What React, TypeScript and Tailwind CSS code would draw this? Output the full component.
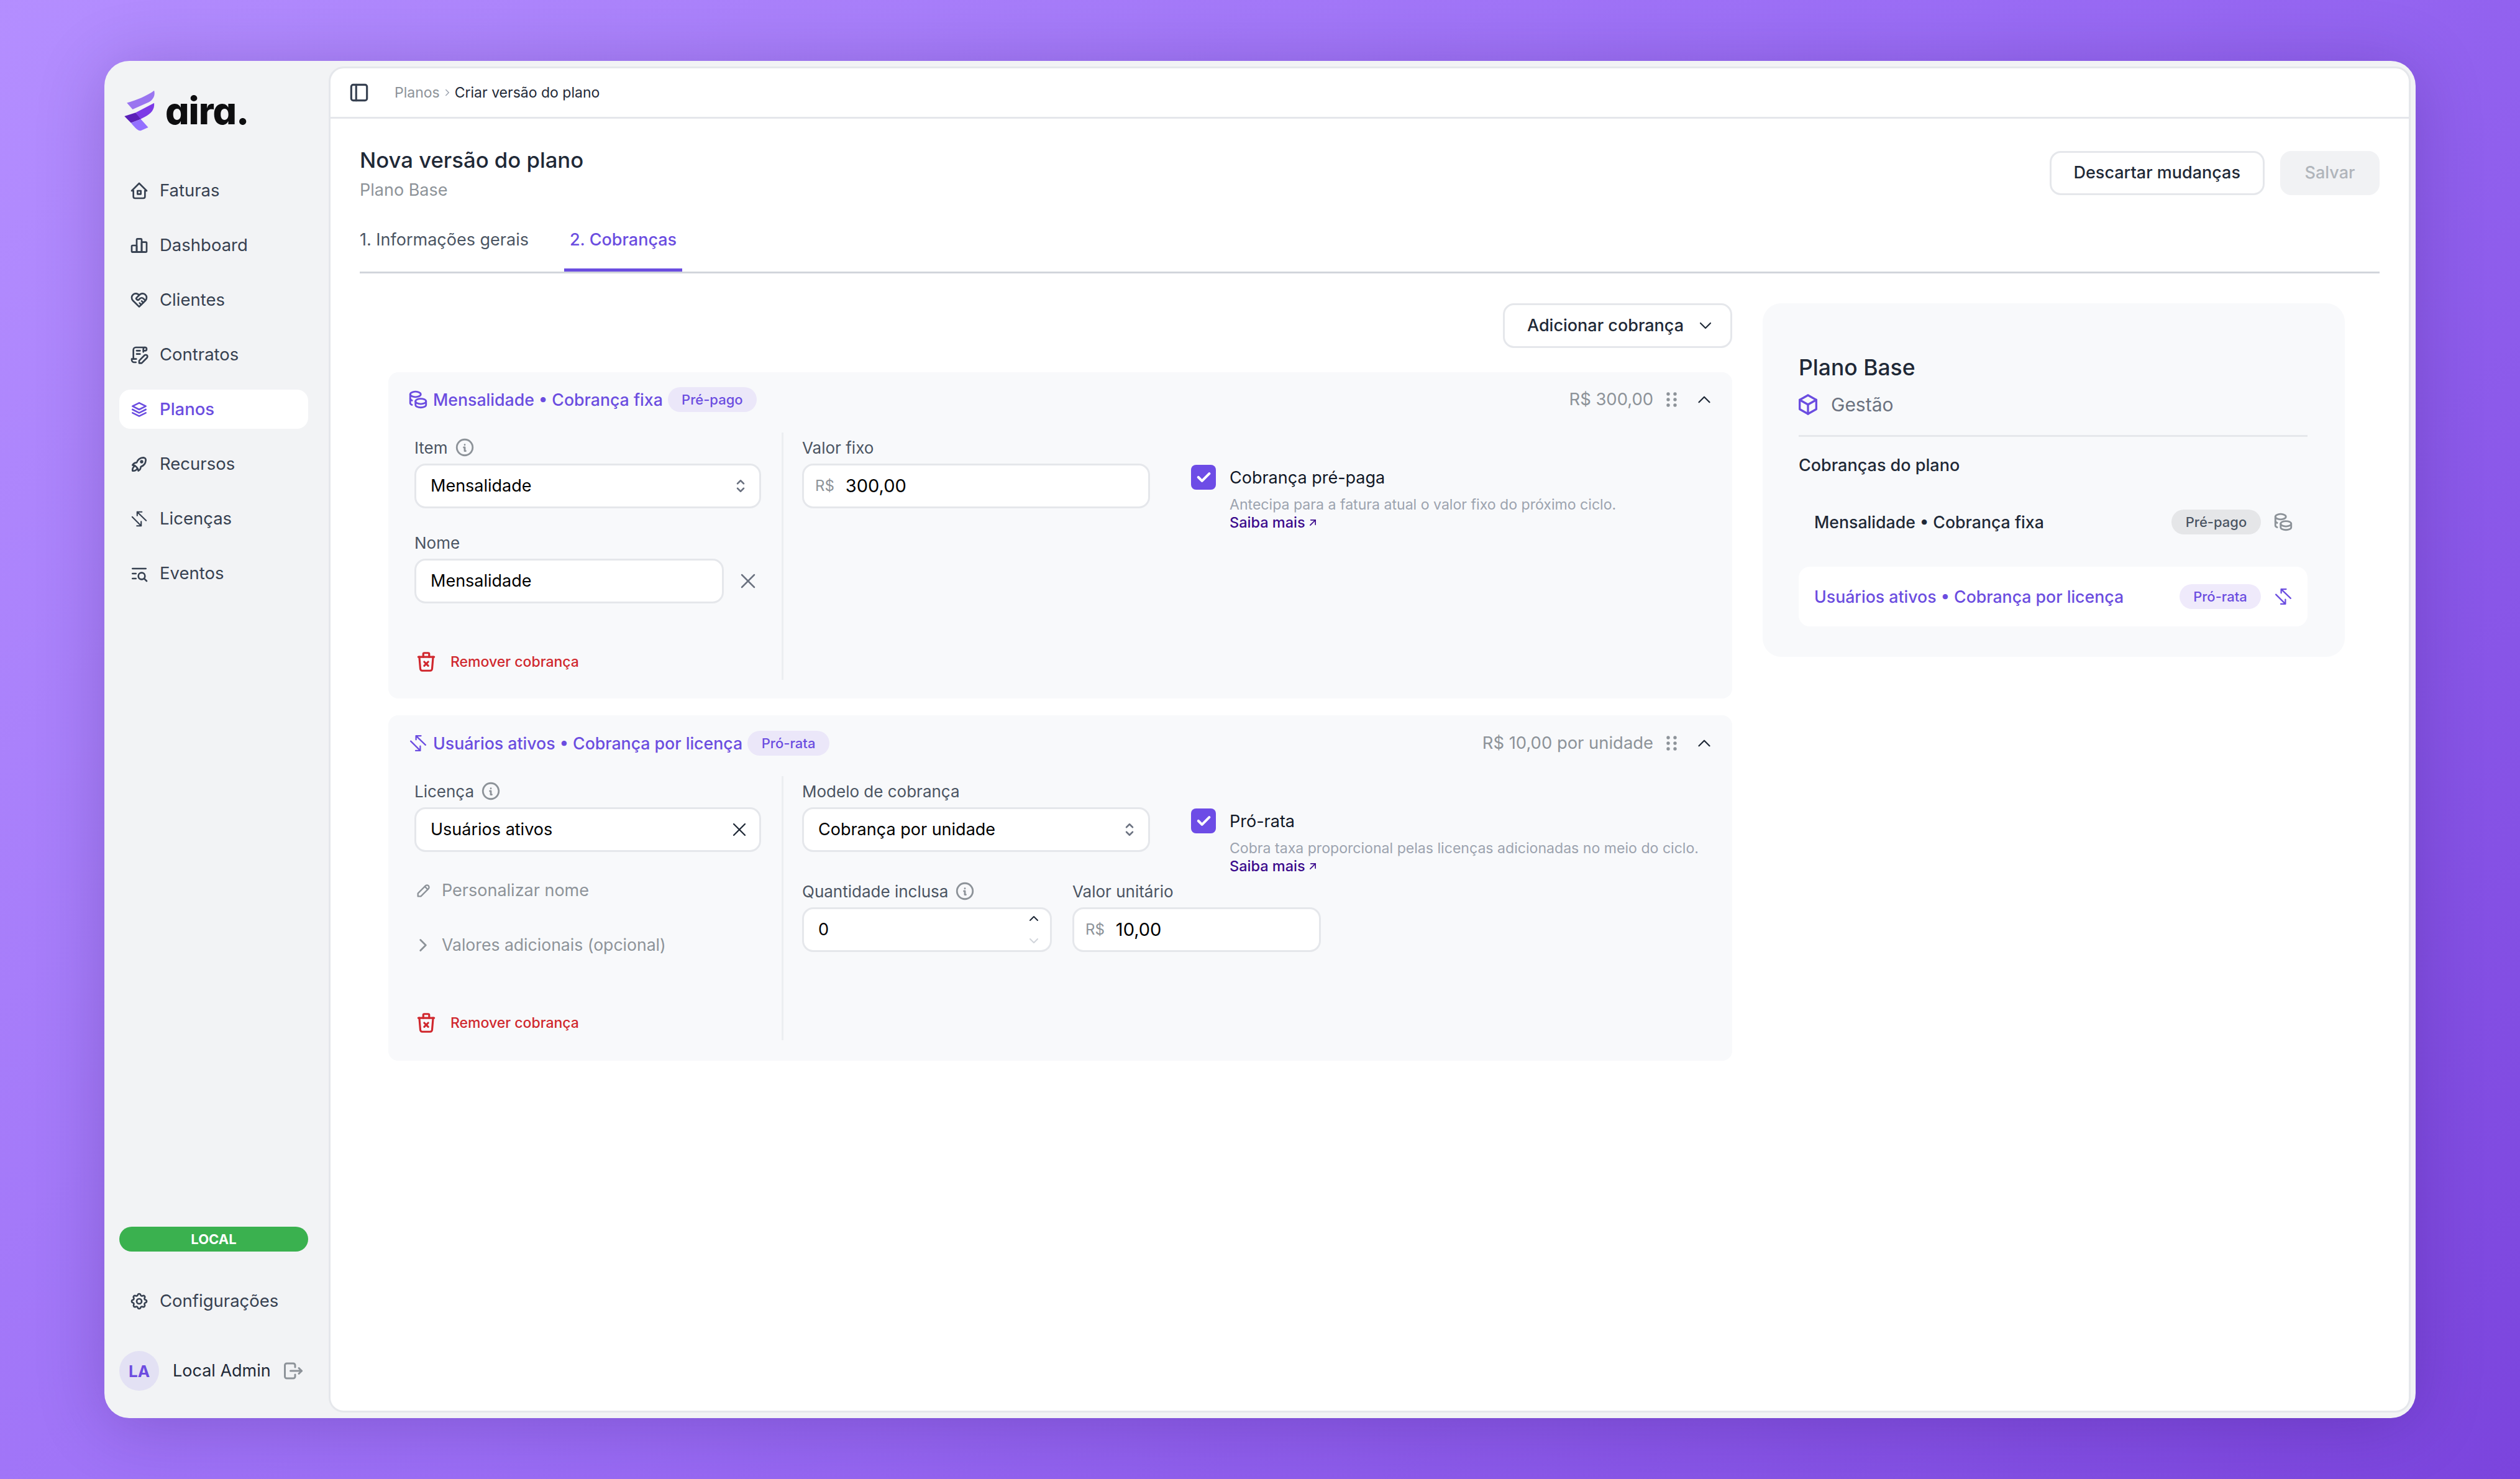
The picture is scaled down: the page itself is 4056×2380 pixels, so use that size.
import React from 'react';
import {
  TbHome2, TbChartBar, TbHeartHandshake, TbContract, TbStack2, TbRocket, TbListSearch, TbSettings, TbLogout,
  TbLayoutSidebar, TbInfoCircle, TbSelector, TbCoins, TbX, TbTrashX, TbPencil, TbChevronUp, TbChevronDown,
  TbChevronRight, TbBox, TbArrowUpRight, TbCheck,
} from 'react-icons/tb';

const SwapIcon = ({ className }: { className?: string }) => (
  <svg viewBox="-3 -3 30 30" fill="none" stroke="currentColor" strokeWidth="2" strokeLinecap="round" strokeLinejoin="round" className={className}>
    <path d="M22.5 14.5 9 1.5M9 7V1.5h7M1.5 9 15 22.5M15 16v6.5H8.5" />
  </svg>
);

const Logo = () => (
  <svg viewBox="30 30 150 200" className="w-[50px] h-[66px] shrink-0">
    <path d="M42 92C90 78 140 58 175 32C181 55 172 75 150 88L70 124Z" fill="#9a75f0" />
    <path d="M85 140L175 93C178 125 160 145 130 160L108 172Z" fill="#7c3ae6" />
    <path d="M30 157L85 140L110 172L62 190Z" fill="#5a20b8" />
    <path d="M62 190L110 172L146 212L110 228C95 228 85 218 62 190Z" fill="#9470ff" />
  </svg>
);

const Grip = () => (
  <svg viewBox="0 0 17 24" className="w-[17px] h-[24px] text-[#8d9399]" fill="currentColor">
    <circle cx="3" cy="3" r="2.7" /><circle cx="14" cy="3" r="2.7" />
    <circle cx="3" cy="12" r="2.7" /><circle cx="14" cy="12" r="2.7" />
    <circle cx="3" cy="21" r="2.7" /><circle cx="14" cy="21" r="2.7" />
  </svg>
);

const nav = [
  { label: 'Faturas', icon: TbHome2 },
  { label: 'Dashboard', icon: TbChartBar },
  { label: 'Clientes', icon: TbHeartHandshake },
  { label: 'Contratos', icon: TbContract },
  { label: 'Planos', icon: TbStack2, active: true },
  { label: 'Recursos', icon: TbRocket },
  { label: 'Licenças', icon: SwapIcon },
  { label: 'Eventos', icon: TbListSearch },
];

const Sidebar = () => (
  <aside className="w-[361px] shrink-0 flex flex-col pl-[24px] pr-[33px] pt-[48px] pb-[44px]">
    <div className="flex items-center gap-[16px] pl-[8px] h-[64px]">
      <Logo />
      <span className="text-[60.5px] leading-none font-extrabold text-[#0e0e10] tracking-[-1px] [font-feature-settings:'cv11']">aira.</span>
    </div>
    <nav className="mt-[65px] flex flex-col gap-[25px]">
      {nav.map((n) => (
        <div
          key={n.label}
          className={`h-[63px] flex items-center gap-[17px] pl-[16px] rounded-[18px] text-[27.5px] ${n.active ? 'bg-white text-[#6b4de0] font-medium' : 'text-[#374151]'}`}
        >
          <n.icon className="w-[32px] h-[32px] shrink-0" />
          {n.label}
        </div>
      ))}
    </nav>
    <div className="mt-auto h-[40px] rounded-full bg-[#3ab14f] text-white text-[22px] font-bold flex items-center justify-center">LOCAL</div>
    <div className="mt-[48px] h-[63px] flex items-center gap-[17px] pl-[16px] text-[27.5px] text-[#374151]">
      <TbSettings className="w-[32px] h-[32px] shrink-0" />
      Configurações
    </div>
    <div className="mt-[49px] flex items-center">
      <div className="w-[64px] h-[64px] rounded-full bg-[#e3e1f4] text-[#6d4ce0] text-[26px] font-bold flex items-center justify-center">LA</div>
      <span className="ml-[22px] text-[27px] text-[#1f2937]">Local Admin</span>
      <TbLogout className="ml-[18px] w-[36px] h-[36px] text-[#8d9399]" />
    </div>
  </aside>
);

const Label = ({ children, info }: { children: React.ReactNode; info?: boolean }) => (
  <div className="h-[36px] mb-[8px] flex items-center gap-[10px] text-[26px] text-[#4b5563]">
    {children}
    {info && <TbInfoCircle className="w-[34px] h-[34px] text-[#8d9399]" />}
  </div>
);

const Box = ({ className, children }: { className?: string; children: React.ReactNode }) => (
  <div className={`h-[72px] flex items-center px-[23px] bg-white rounded-[18px] border-[3px] border-[#e5e7eb] text-[27px] text-black ${className ?? ''}`}>
    {children}
  </div>
);

const Badge = ({ children, className }: { children: React.ReactNode; className?: string }) => (
  <span className={`h-[40px] flex items-center justify-center rounded-full text-[22px] font-medium ${className ?? ''}`}>{children}</span>
);

const Remove = () => (
  <div className="mt-auto h-[30px] flex items-center gap-[20px] text-[23px] text-[#d0282e] font-medium">
    <TbTrashX className="w-[38px] h-[38px] shrink-0" />
    Remover cobrança
  </div>
);

const CardHeader = ({ icon: Icon, title, badge, badgeClass, amount, className }: {
  icon: React.ComponentType<{ className?: string }>; title: string; badge: string; badgeClass: string; amount: string; className: string;
}) => (
  <div className={`flex items-center pl-[31px] pr-[28px] ${className}`}>
    <Icon className="w-[34px] h-[34px] text-[#6b4de0]" />
    <span className="ml-[7px] text-[26.7px] font-medium text-[#6b4de0]">{title}</span>
    <Badge className={`ml-[8px] bg-[#ebe7f9] text-[#6b4de0] ${badgeClass}`}>{badge}</Badge>
    <span className="ml-auto text-[27.4px] text-[#8d9399]">{amount}</span>
    <span className="ml-[21px]"><Grip /></span>
    <TbChevronUp className="ml-[27px] w-[34px] h-[34px] text-[#1f2937]" strokeWidth={1.6} />
  </div>
);

const CheckInfo = ({ label, text }: { label: string; text: string }) => (
  <div className="flex gap-[22px]">
    <div className="w-[40px] h-[40px] shrink-0 rounded-[8px] bg-[#6d4ce6] flex items-center justify-center">
      <TbCheck className="w-[28px] h-[28px] text-white" strokeWidth={3.5} />
    </div>
    <div className="flex flex-col">
      <span className="mt-[3px] h-[36px] leading-[36px] text-[27px] text-[#111827]">{label}</span>
      <span className="mt-[10px] h-[30px] leading-[30px] text-[23.1px] text-[#9ca3af] whitespace-nowrap">{text}</span>
      <span className="h-[28px] leading-[28px] text-[23.5px] font-medium text-[#3b0a8c] flex items-center">
        Saiba mais
        <TbArrowUpRight className="ml-[2px] w-[20px] h-[20px]" />
      </span>
    </div>
  </div>
);

const Money = ({ value }: { value: string }) => (
  <div className="-ml-[5px] flex items-center">
    <span className="text-[24px] text-[#8d9399] mr-[18px]">R$</span>
    <span className="text-[29px]">{value}</span>
  </div>
);

const Tabs = () => (
  <div className="mt-[44px] flex gap-[57px] border-b-[3px] border-[#d1d5db]">
    <div className="pb-[29px] border-b-[5px] border-transparent h-[69px] text-[27px] leading-[36px] text-[#4b5563]">1. Informações gerais</div>
    <div className="px-[9px] pb-[29px] border-b-[5px] border-[#6b4de0] h-[69px] text-[27px] leading-[36px] font-medium text-[#6b4de0]">2. Cobranças</div>
  </div>
);

const FixedCard = () => (
  <section className="bg-[#f8f9fb] rounded-[16px] pb-[30px]">
    <CardHeader icon={TbCoins} title="Mensalidade • Cobrança fixa" badge="Pré-pago" badgeClass="w-[143px]" amount="R$ 300,00" className="h-[88px]" />
    <div className="mt-[9px] h-[398px] flex pl-[42px]">
      <div className="w-[558px] flex flex-col pt-[6px] pb-[14px]">
        <Label info>Item</Label>
        <Box className="justify-between">
          Mensalidade
          <TbSelector className="-mr-[8px] w-[30px] h-[30px] text-[#6b7280]" />
        </Box>
        <div className="mt-[37px]"><Label>Nome</Label></div>
        <div className="flex items-center">
          <Box className="w-[498px]">Mensalidade</Box>
          <TbX className="ml-[19px] w-[40px] h-[40px] text-[#6b7280]" strokeWidth={1.5} />
        </div>
        <Remove />
      </div>
      <div className="ml-[33px] w-[3px] bg-[#eceef1]" />
      <div className="ml-[30px] flex gap-[66px] pt-[6px]">
        <div className="w-[560px]">
          <Label>Valor fixo</Label>
          <Box><Money value="300,00" /></Box>
        </div>
        <div className="pt-[46px]">
          <CheckInfo label="Cobrança pré-paga" text="Antecipa para a fatura atual o valor fixo do próximo ciclo." />
        </div>
      </div>
    </div>
  </section>
);

const LicenseCard = () => (
  <section className="mt-[27px] bg-[#f8f9fb] rounded-[16px] pb-[33px]">
    <CardHeader icon={SwapIcon} title="Usuários ativos • Cobrança por licença" badge="Pró-rata" badgeClass="w-[132px]" amount="R$ 10,00 por unidade" className="h-[90px]" />
    <div className="mt-[8px] h-[425px] flex pl-[42px]">
      <div className="w-[558px] flex flex-col pt-[6px] pb-[13px]">
        <Label info>Licença</Label>
        <Box className="justify-between">
          Usuários ativos
          <TbX className="-mr-[9px] w-[36px] h-[36px] text-[#1f2937]" strokeWidth={1.5} />
        </Box>
        <div className="mt-[44px] h-[36px] flex items-center gap-[15px] pl-[1px] text-[27px] text-[#8d9399]">
          <TbPencil className="w-[28px] h-[28px]" />
          Personalizar nome
        </div>
        <div className="mt-[52px] h-[36px] flex items-center gap-[13px] -ml-[3px] text-[26.6px] text-[#8d9399]">
          <TbChevronRight className="w-[34px] h-[34px]" />
          Valores adicionais (opcional)
        </div>
        <Remove />
      </div>
      <div className="ml-[33px] w-[3px] bg-[#eceef1]" />
      <div className="ml-[30px] flex flex-col pt-[6px]">
        <div className="flex gap-[66px]">
          <div className="w-[560px]">
            <Label>Modelo de cobrança</Label>
            <Box className="justify-between">
              Cobrança por unidade
              <TbSelector className="-mr-[8px] w-[30px] h-[30px] text-[#6b7280]" />
            </Box>
          </div>
          <div className="pt-[46px]">
            <CheckInfo label="Pró-rata" text="Cobra taxa proporcional pelas licenças adicionadas no meio do ciclo." />
          </div>
        </div>
        <div className="mt-[8px] flex gap-[33px]">
          <div className="w-[402px]">
            <Label info>Quantidade inclusa</Label>
            <Box className="justify-between pr-[14px]">
              0
              <div className="flex flex-col gap-[12px]">
                <TbChevronUp className="w-[24px] h-[24px] text-[#1f2937]" />
                <TbChevronDown className="w-[24px] h-[24px] text-[#d1d5db]" />
              </div>
            </Box>
          </div>
          <div className="w-[400px]">
            <Label>Valor unitário</Label>
            <Box><Money value="10,00" /></Box>
          </div>
        </div>
      </div>
    </div>
  </section>
);

const Summary = () => (
  <aside className="w-[937px] h-[569px] shrink-0 bg-[#f8f9fb] rounded-[30px] pl-[58px] pr-[60px] pt-[81px]">
    <h3 className="text-[35.5px] leading-[46px] font-medium text-[#1f2937]">Plano Base</h3>
    <div className="mt-[16px] flex items-center gap-[17px] text-[30px] leading-[40px] text-[#6b7280]">
      <TbBox className="-ml-[5px] w-[40px] h-[40px] text-[#6b4de0]" />
      Gestão
    </div>
    <div className="mt-[29px] h-[3px] bg-[#e5e7eb]" />
    <div className="mt-[28px] h-[36px] leading-[36px] text-[27px] font-medium text-[#1f2937]">Cobranças do plano</div>
    <div className="mt-[53px] h-[40px] flex items-center pl-[25px] pr-[22px]">
      <span className="text-[26.7px] font-medium text-[#1f2937]">Mensalidade • Cobrança fixa</span>
      <Badge className="ml-auto w-[144px] bg-[#e5e6e8] text-[#4b5563]">Pré-pago</Badge>
      <TbCoins className="ml-[19px] w-[34px] h-[34px] text-[#8d9399]" />
    </div>
    <div className="mt-[52px] h-[96px] flex items-center pl-[25px] pr-[22px] bg-white rounded-[18px]">
      <span className="text-[26.7px] font-medium text-[#6b4de0]">Usuários ativos • Cobrança por licença</span>
      <Badge className="ml-auto w-[131px] bg-[#efeafb] text-[#6b4de0]">Pró-rata</Badge>
      <SwapIcon className="ml-[19px] w-[34px] h-[34px] text-[#6b4de0]" />
    </div>
  </aside>
);

const Main = () => (
  <main className="flex-1 mt-[9px] mb-[9px] mr-[8px] bg-white rounded-[24px] border-[3px] border-[#e5e7eb] overflow-hidden">
    <div className="h-[81px] border-b-[3px] border-[#e5e7eb] flex items-center pl-[27px] text-[23px]">
      <TbLayoutSidebar className="w-[38px] h-[38px] text-[#374151]" />
      <span className="ml-[38px] text-[#8d9399]">Planos</span>
      <TbChevronRight className="mx-[3px] w-[18px] h-[18px] text-[#9ca3af]" />
      <span className="text-[#1f2937]">Criar versão do plano</span>
    </div>
    <div className="px-[47px] pt-[44px]">
      <div className="flex justify-between items-start">
        <div>
          <h1 className="text-[34.7px] leading-[44px] font-medium text-[#1f2937]">Nova versão do plano</h1>
          <p className="mt-[9px] text-[27px] leading-[36px] text-[#8d9399]">Plano Base</p>
        </div>
        <div className="mt-[8px] flex gap-[25px]">
          <div className="h-[71px] px-[36px] flex items-center rounded-[18px] border-[3px] border-[#e5e7eb] text-[27px] font-medium text-[#1f2937]">Descartar mudanças</div>
          <div className="w-[160px] h-[71px] flex items-center justify-center rounded-[18px] bg-[#f1f2f4] text-[27px] font-medium text-[#b0b5bb]">Salvar</div>
        </div>
      </div>
      <Tabs />
      <div className="mt-[48px] pl-[46px] flex gap-[49px] items-start">
        <div className="w-[2163px] shrink-0">
          <div className="flex justify-end">
            <div className="h-[72px] w-[369px] pl-[36px] pr-[24px] flex items-center justify-between rounded-[18px] border-[3px] border-[#e5e7eb] text-[27px] font-medium text-[#1f2937]">
              Adicionar cobrança
              <TbChevronDown className="w-[32px] h-[32px]" strokeWidth={1.6} />
            </div>
          </div>
          <div className="mt-[39px]">
            <FixedCard />
            <LicenseCard />
          </div>
        </div>
        <Summary />
      </div>
    </div>
  </main>
);

export default function App() {
  return (
    <div className="w-[4056px] h-[2380px] pt-[98px] pl-[168px] font-['Inter',sans-serif] bg-[linear-gradient(135deg,#b48eff_0%,#9a6cf5_50%,#7b44dd_100%)] overflow-hidden">
      <div className="w-[3720px] h-[2184px] flex rounded-[40px] bg-[#f2f3f5] shadow-[0_10px_110px_rgba(30,0,80,0.22)]">
        <Sidebar />
        <Main />
      </div>
    </div>
  );
}
